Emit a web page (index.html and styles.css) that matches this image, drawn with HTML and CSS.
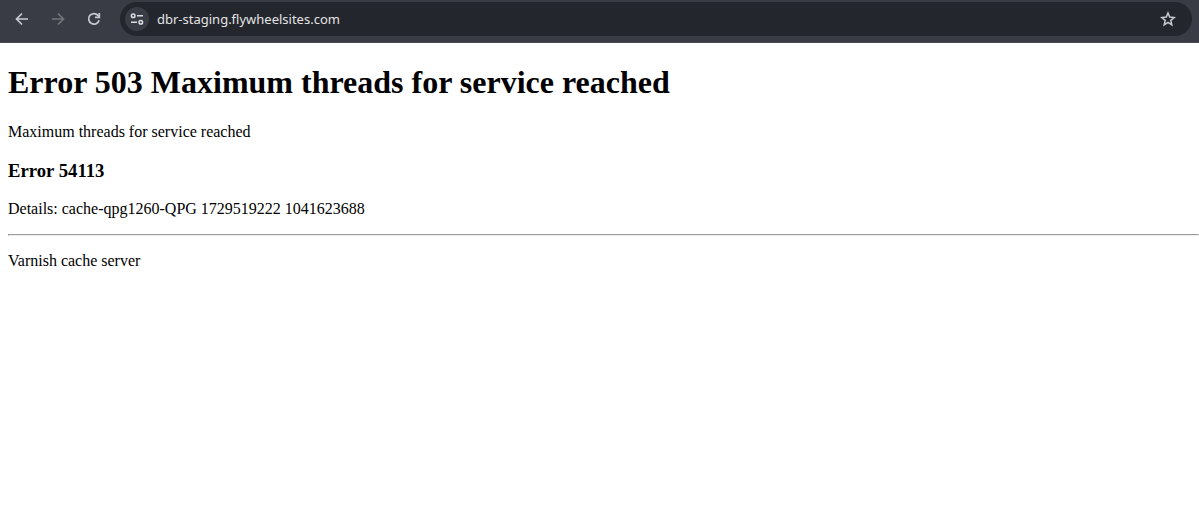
FILE: index.html
```html
<!DOCTYPE html>
<html lang="en">
<head>
<meta charset="utf-8">
<title>503 Maximum threads for service reached</title>
<link rel="stylesheet" href="styles.css">
</head>
<body>
<header class="toolbar">
  <nav class="nav" aria-label="Browser navigation">
    <button class="icon-button" type="button" aria-label="Back">
      <svg width="16" height="16" viewBox="0 0 16 16" fill="none" stroke="currentColor" stroke-width="1.7"><path d="M14 8H3M8 2.5L2.5 8L8 13.5"/></svg>
    </button>
    <button class="icon-button icon-button-off" type="button" aria-label="Forward" disabled>
      <svg width="16" height="16" viewBox="0 0 16 16" fill="none" stroke="currentColor" stroke-width="1.7"><path d="M2 8h11M8 2.5L13.5 8L8 13.5"/></svg>
    </button>
    <button class="icon-button" type="button" aria-label="Reload">
      <svg width="16" height="16" viewBox="0 0 16 16" fill="none" stroke="currentColor" stroke-width="1.7"><path d="M13.1 9.2A5.3 5.3 0 1 1 12 4.4L13.2 5.8"/><path d="M13.3 2v4.4H9"/></svg>
    </button>
  </nav>
  <div class="address-bar">
    <button class="site-info" type="button" aria-label="View site information">
      <svg width="16" height="16" viewBox="0 0 16 16" fill="none" stroke="currentColor" stroke-width="1.5"><circle cx="4.2" cy="4.7" r="1.8"/><path d="M8 4.7h6M2 11.2h6"/><circle cx="11.8" cy="11.2" r="1.8"/></svg>
    </button>
    <input class="address" type="text" aria-label="Address" value="dbr-staging.flywheelsites.com" spellcheck="false">
    <button class="icon-button" type="button" aria-label="Bookmark this page">
      <svg width="16" height="16" viewBox="0 0 16 16" fill="none" stroke="currentColor" stroke-width="1.5"><path d="M8 2L9.7 6.1L14.2 6.5L10.8 9.4L11.8 13.8L8 11.4L4.2 13.8L5.2 9.4L1.8 6.5L6.3 6.1Z"/></svg>
    </button>
  </div>
</header>
<main class="page">
  <h1>Error 503 Maximum threads for service reached</h1>
  <p>Maximum threads for service reached</p>
  <h3>Error 54113</h3>
  <p>Details: cache-qpg1260-QPG 1729519222 1041623688</p>
  <hr>
  <p>Varnish cache server</p>
</main>
</body>
</html>
```
FILE: styles.css
```css
body {
  margin: 0;
  background: #fff;
  color: #000;
  font-family: "Liberation Serif", "Times New Roman", serif;
  font-size: 16px;
}

.toolbar {
  display: flex;
  align-items: center;
  gap: 8px;
  padding: 2px 7px 6px 4px;
  border-bottom: 1px solid #484a50;
  background: #3a3c45;
}

.nav {
  display: flex;
}

.icon-button {
  display: flex;
  align-items: center;
  justify-content: center;
  width: 36px;
  height: 34px;
  padding: 0;
  border: 0;
  background: none;
  color: #c7cad1;
}

.icon-button-off {
  color: #75767b;
}

.address-bar {
  display: flex;
  flex: 1;
  align-items: center;
  padding: 0 6px 0 5px;
  border-radius: 17px;
  background: #23262d;
}

.site-info {
  display: flex;
  align-items: center;
  justify-content: center;
  width: 24px;
  height: 24px;
  padding: 0;
  border: 0;
  border-radius: 50%;
  background: #3a3c45;
  color: #dcdde0;
}

.address {
  flex: 1;
  min-width: 0;
  margin-left: 8px;
  padding: 0;
  border: 0;
  outline: 0;
  background: none;
  color: #e3e3e3;
  font-family: "Noto Sans", "Open Sans", sans-serif;
  font-size: 13px;
}

.page {
  display: flow-root;
  margin-left: 8px;
}
```
